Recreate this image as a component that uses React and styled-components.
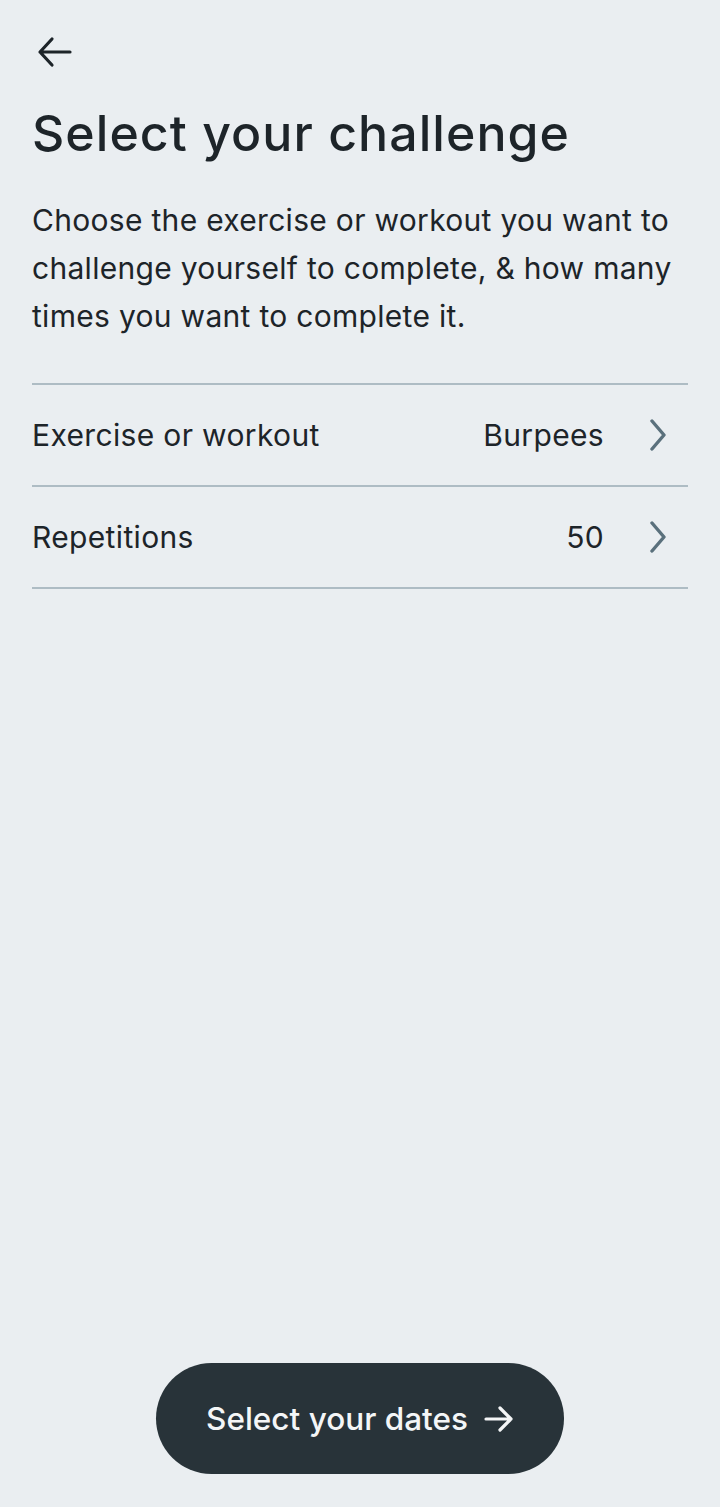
import styled, { createGlobalStyle } from "styled-components";

const GlobalStyle = createGlobalStyle`
  html, body {
    margin: 0;
    padding: 0;
    background: #eaeef1;
  }
  * { box-sizing: border-box; }
`

const Page = styled.div`
  min-height: 1507px;
  display: flex;
  flex-direction: column;
  padding: 0 32px 33px;
  font-family: Inter, "Noto Sans", sans-serif;
  color: #1d2429;
  background: #eaeef1;
`

const BackButton = styled.button`
  margin-top: 32px;
  width: 48px;
  height: 40px;
  padding: 0 0 0 4px;
  border: none;
  background: none;
  display: flex;
  align-items: center;
  cursor: pointer;
  color: #1d2429;
`

const Title = styled.h1`
  margin: 32px 0 0;
  font-size: 50px;
  font-weight: 500;
  line-height: 58px;
  letter-spacing: 1.05px;
`

const Intro = styled.p`
  margin: 34px 0 0;
  font-size: 30px;
  line-height: 48px;
  font-weight: 400;
  letter-spacing: 0.3px;
`

const List = styled.div`
  margin-top: 43px;
  border-top: 2px solid #aebcc4;
`

const Row = styled.div`
  height: 102px;
  display: flex;
  align-items: center;
  border-bottom: 2px solid #aebcc4;
  font-size: 30px;
  letter-spacing: 0.35px;
  cursor: pointer;
`

const Label = styled.span`
  flex: 1;
`

const Value = styled.span`
  margin-right: 44px;
`

const Chevron = styled.svg`
  margin-right: 20px;
`

const Spacer = styled.div`
  flex: 1;
`

const Footer = styled.div`
  display: flex;
  justify-content: center;
`

const PrimaryButton = styled.button`
  width: 408px;
  height: 111px;
  border: none;
  border-radius: 56px;
  background: #283339;
  color: #f4f6f7;
  font-family: Inter, "Noto Sans", sans-serif;
  font-size: 31.5px;
  font-weight: 500;
  display: flex;
  align-items: center;
  justify-content: center;
  gap: 16px;
  cursor: pointer;
`

const ChevronIcon = () => (
  <Chevron width="20" height="32" viewBox="0 0 20 32" fill="none">
    <path d="M4 2 L16 16 L4 30" stroke="#5a707c" strokeWidth="3.4" strokeLinecap="round" strokeLinejoin="round" />
  </Chevron>
)

const rows = [
  { label: "Exercise or workout", value: "Burpees" },
  { label: "Repetitions", value: "50" },
]

export default function App() {
  return (
    <>
      <GlobalStyle />
      <Page>
        <BackButton aria-label="Back">
          <svg width="36" height="32" viewBox="0 0 36 32" fill="none">
            <path d="M34 16 H4 M16 3 L4 16 L16 29" stroke="currentColor" strokeWidth="3.2" strokeLinecap="round" strokeLinejoin="round" />
          </svg>
        </BackButton>
        <Title>Select your challenge</Title>
        <Intro>
          Choose the exercise or workout you want to challenge yourself to complete, &amp; how many times you want to complete it.
        </Intro>
        <List>
          {rows.map(r => (
            <Row key={r.label}>
              <Label>{r.label}</Label>
              <Value>{r.value}</Value>
              <ChevronIcon />
            </Row>
          ))}
        </List>
        <Spacer />
        <Footer>
          <PrimaryButton>
            Select your dates
            <svg width="30" height="28" viewBox="0 0 30 28" fill="none">
              <path d="M2 14 H27 M16 3 L27 14 L16 25" stroke="currentColor" strokeWidth="3.2" strokeLinecap="round" strokeLinejoin="round" />
            </svg>
          </PrimaryButton>
        </Footer>
      </Page>
    </>
  )
}
